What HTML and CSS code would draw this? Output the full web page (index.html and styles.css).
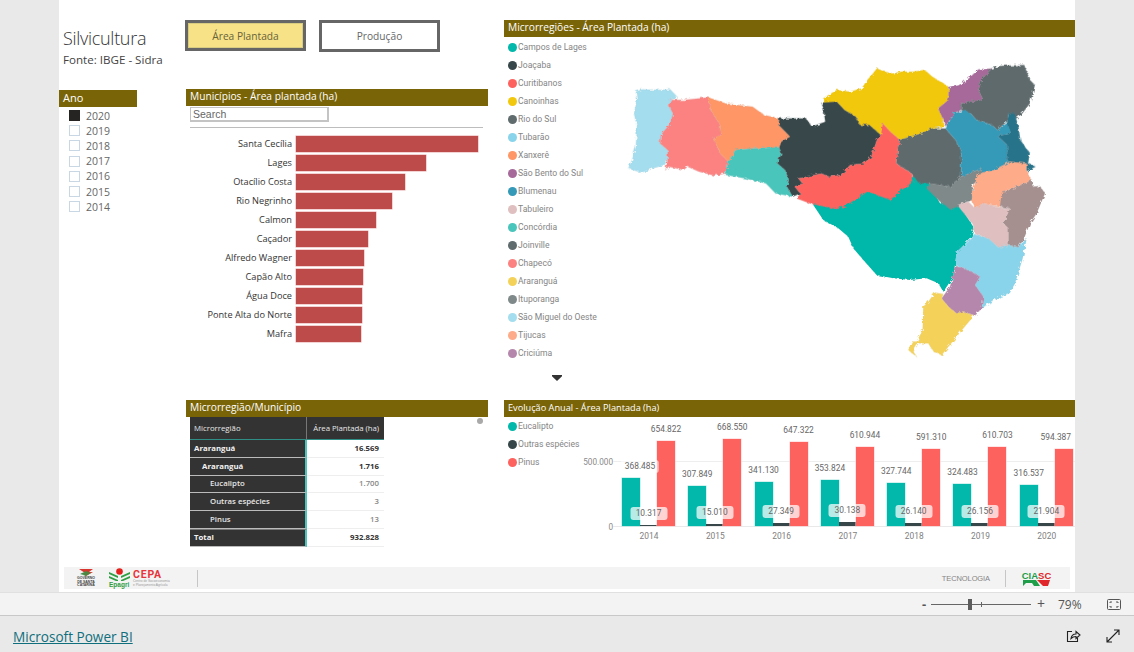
FILE: index.html
```html
<!DOCTYPE html>
<html lang="pt-BR">
<head>
<meta charset="utf-8">
<title>Silvicultura</title>
<link rel="stylesheet" href="styles.css">
</head>
<body>
<main class="stage">
  <div class="canvas">
    <section class="cell-intro">
      <h1 class="title">Silvicultura</h1>
      <p class="source">Fonte: IBGE - Sidra</p>
      <h2 class="band band-ano">Ano</h2>
      <ul class="years">
        <li class="year"><span class="check check-on"></span>2020</li>
        <li class="year"><span class="check"></span>2019</li>
        <li class="year"><span class="check"></span>2018</li>
        <li class="year"><span class="check"></span>2017</li>
        <li class="year"><span class="check"></span>2016</li>
        <li class="year"><span class="check"></span>2015</li>
        <li class="year"><span class="check"></span>2014</li>
      </ul>
    </section>

    <section class="cell-mun">
      <div class="tabs">
        <button class="tab tab-on">Área Plantada</button>
        <button class="tab">Produção</button>
      </div>
      <h2 class="band">Municípios - Área plantada (ha)</h2>
      <div class="search">Search</div>
      <div class="rule"></div>
      <ul class="hbars">
        <li class="hbar"><span class="hbar-name">Santa Cecília</span><span class="hbar-fill" style="width:182px"></span></li>
        <li class="hbar"><span class="hbar-name">Lages</span><span class="hbar-fill" style="width:130px"></span></li>
        <li class="hbar"><span class="hbar-name">Otacílio Costa</span><span class="hbar-fill" style="width:109px"></span></li>
        <li class="hbar"><span class="hbar-name">Rio Negrinho</span><span class="hbar-fill" style="width:96px"></span></li>
        <li class="hbar"><span class="hbar-name">Calmon</span><span class="hbar-fill" style="width:80px"></span></li>
        <li class="hbar"><span class="hbar-name">Caçador</span><span class="hbar-fill" style="width:72px"></span></li>
        <li class="hbar"><span class="hbar-name">Alfredo Wagner</span><span class="hbar-fill" style="width:68px"></span></li>
        <li class="hbar"><span class="hbar-name">Capão Alto</span><span class="hbar-fill" style="width:67px"></span></li>
        <li class="hbar"><span class="hbar-name">Água Doce</span><span class="hbar-fill" style="width:66px"></span></li>
        <li class="hbar"><span class="hbar-name">Ponte Alta do Norte</span><span class="hbar-fill" style="width:66px"></span></li>
        <li class="hbar"><span class="hbar-name">Mafra</span><span class="hbar-fill" style="width:65px"></span></li>
      </ul>
    </section>

    <section class="cell-map">
      <h2 class="band">Microrregiões - Área Plantada (ha)</h2>
      <div class="map-body">
        <div class="map-legend">
          <ul class="legend">
            <li class="legend-item"><i class="dot" style="background:#01b8aa"></i>Campos de Lages</li>
            <li class="legend-item"><i class="dot" style="background:#374649"></i>Joaçaba</li>
            <li class="legend-item"><i class="dot" style="background:#fd625e"></i>Curitibanos</li>
            <li class="legend-item"><i class="dot" style="background:#f2c80f"></i>Canoinhas</li>
            <li class="legend-item"><i class="dot" style="background:#5f6b6d"></i>Rio do Sul</li>
            <li class="legend-item"><i class="dot" style="background:#8ad4eb"></i>Tubarão</li>
            <li class="legend-item"><i class="dot" style="background:#fe9666"></i>Xanxerê</li>
            <li class="legend-item"><i class="dot" style="background:#a66999"></i>São Bento do Sul</li>
            <li class="legend-item"><i class="dot" style="background:#3599b8"></i>Blumenau</li>
            <li class="legend-item"><i class="dot" style="background:#dfbfbf"></i>Tabuleiro</li>
            <li class="legend-item"><i class="dot" style="background:#4ac5bb"></i>Concórdia</li>
            <li class="legend-item"><i class="dot" style="background:#5f6b6d"></i>Joinville</li>
            <li class="legend-item"><i class="dot" style="background:#fb8281"></i>Chapecó</li>
            <li class="legend-item"><i class="dot" style="background:#f4d25a"></i>Araranguá</li>
            <li class="legend-item"><i class="dot" style="background:#7f898a"></i>Ituporanga</li>
            <li class="legend-item"><i class="dot" style="background:#a4ddee"></i>São Miguel do Oeste</li>
            <li class="legend-item"><i class="dot" style="background:#fdab89"></i>Tijucas</li>
            <li class="legend-item"><i class="dot" style="background:#b687ac"></i>Criciúma</li>
          </ul>
          <svg class="legend-more" viewBox="0 0 10 6" width="10" height="6"><path d="M0 0H10V1.2L5 6L0 1.2Z" fill="#333"/></svg>
        </div>
        <svg class="map" viewBox="600 50 460 320" width="460" height="320" aria-label="Mapa das microrregiões">
          <defs>
            <filter id="rough" x="-5%" y="-5%" width="110%" height="110%">
              <feTurbulence type="fractalNoise" baseFrequency="0.28" numOctaves="3" seed="7"/>
              <feDisplacementMap in="SourceGraphic" scale="4"/>
            </filter>
          </defs>
          <g filter="url(#rough)" stroke="#9a9a9a" stroke-width="0.35" stroke-opacity=".7">
            <g transform="translate(600 170) scale(.3333)">
              <polygon fill="#01b8aa" points="640,105 640,85 735,95 770,45 870,70 900,50 940,15 985,35 1020,100 1072,95 1120,170 1115,200 1070,250 1065,285 1060,320 1030,365 1015,340 980,325 930,330 880,325 830,315 790,270 760,235 745,200 715,175 670,150"/>
            </g>
            <g transform="translate(500 10) scale(.3826 .3333)">
              <polygon fill="#a4ddee" points="355,245 370,238 420,240 445,238 465,262 445,270 442,290 452,310 445,340 420,375 418,400 438,420 438,450 430,465 400,475 370,488 335,475 345,450 355,410 358,350 350,310 358,270"/>
              <polygon fill="#fb8281" points="445,270 480,270 545,262 550,300 575,345 578,375 558,385 575,430 597,455 590,490 560,497 520,485 490,470 480,480 440,470 432,482 438,450 438,420 418,400 420,375 445,340 452,310 442,290"/>
              <polygon fill="#fe9666" points="545,262 590,280 620,285 660,290 690,315 730,325 728,345 750,370 758,380 735,395 730,412 660,415 615,420 597,455 575,430 558,385 578,375 575,345 550,300"/>
              <polygon fill="#4ac5bb" points="615,420 660,415 730,412 735,430 725,460 745,480 755,510 750,530 765,560 720,550 695,520 640,505 590,495 597,455"/>
              <polygon fill="#f2c80f" points="845,265 880,240 915,245 945,235 960,210 975,190 985,175 1005,185 1025,190 1050,185 1080,185 1110,180 1130,200 1172,230 1172,270 1145,295 1155,320 1160,350 1130,355 1100,370 1045,390 1020,365 1000,340 995,375 965,345 940,345 930,320 900,300 880,275 845,285"/>
              <polygon fill="#5f6b6d" points="1045,390 1100,370 1130,355 1165,355 1190,390 1205,420 1205,500 1175,530 1120,520 1095,520 1075,490 1035,460 1040,410"/>
              <polygon fill="#fd625e" points="1000,340 1020,365 1045,390 1040,410 1035,460 1075,490 1080,515 1050,540 1020,570 960,545 900,590 870,595 810,580 775,565 785,550 770,530 790,520 780,505 840,490 860,500 890,495 915,465 950,460 970,440 985,390 995,375"/>
              <polygon fill="#374649" points="730,325 770,325 800,325 815,350 850,335 845,295 840,278 880,275 900,300 930,320 940,345 965,345 995,375 985,390 970,440 950,460 915,465 890,495 860,500 840,490 780,505 790,520 770,530 785,550 765,560 750,530 755,510 745,480 725,460 735,430 730,412 735,395 758,380 750,370 728,345"/>
              <polygon fill="#a66999" points="1172,235 1200,225 1225,205 1250,178 1285,175 1260,205 1250,240 1262,268 1205,280 1205,300 1185,310 1165,350 1155,320 1145,295 1172,270"/>
              <polygon fill="#5f6b6d" points="1285,175 1305,168 1370,165 1385,210 1398,225 1385,280 1365,310 1350,325 1330,310 1325,335 1300,360 1285,345 1245,330 1230,310 1205,300 1205,280 1262,268 1250,240 1260,205"/>
              <polygon fill="#3599b8" points="1185,310 1215,300 1230,310 1245,330 1285,345 1300,360 1330,335 1335,370 1300,378 1325,405 1325,450 1340,465 1290,490 1255,510 1258,475 1205,500 1205,420 1190,390 1165,355"/>
              <polygon fill="#28738a" points="1330,310 1345,310 1355,350 1360,390 1385,430 1380,460 1400,470 1375,485 1340,465 1325,450 1325,405 1300,378 1335,370 1325,335"/>
              <polygon fill="#7f898a" points="1258,475 1255,505 1235,525 1235,570 1200,585 1180,600 1150,575 1115,535 1125,520 1175,530 1205,500"/>
            </g>
            <g transform="translate(600 170) scale(.3333)">
              <polygon fill="#fdab89" points="1120,55 1135,10 1180,0 1230,-25 1280,-20 1280,0 1295,30 1215,65 1200,110 1150,100 1125,115 1115,95"/>
              <polygon fill="#a58f8f" points="1205,70 1295,30 1298,50 1320,48 1335,70 1310,130 1290,160 1270,210 1255,232 1225,225 1225,175 1210,160 1230,115 1200,110"/>
              <polygon fill="#dfbfbf" points="1072,105 1105,95 1125,115 1150,100 1200,112 1230,115 1210,160 1225,175 1225,225 1195,232 1165,205 1122,190 1120,165"/>
              <polygon fill="#8ad4eb" points="1122,192 1165,205 1195,232 1225,225 1255,232 1280,205 1268,265 1245,340 1230,368 1180,390 1145,415 1150,380 1125,345 1140,320 1095,295 1065,285 1070,245 1115,205"/>
              <polygon fill="#b687ac" points="1068,288 1095,295 1140,320 1125,345 1150,380 1145,415 1125,437 1090,425 1070,430 1045,410 1025,385 1050,350"/>
              <polygon fill="#f4d25a" points="1005,368 1030,372 1025,385 1045,410 1070,430 1090,425 1122,437 1090,475 1025,555 1000,545 985,520 955,520 940,545 952,562 925,540 935,515 950,515 968,480 970,410 985,395"/>
            </g>
          </g>
        </svg>
      </div>
    </section>

    <section class="cell-table">
      <h2 class="band">Microrregião/Município</h2>
      <span class="scroll-dot"></span>
      <table class="matrix">
        <thead>
          <tr><th class="m-name">Microrregião</th><th class="m-val m-head">Área Plantada (ha)</th></tr>
        </thead>
        <tbody>
          <tr class="m-bold"><th class="m-name">Araranguá</th><td class="m-val">16.569</td></tr>
          <tr class="m-bold"><th class="m-name m-l1">Araranguá</th><td class="m-val">1.716</td></tr>
          <tr><th class="m-name m-l2">Eucalipto</th><td class="m-val">1.700</td></tr>
          <tr><th class="m-name m-l2">Outras espécies</th><td class="m-val">3</td></tr>
          <tr><th class="m-name m-l2">Pinus</th><td class="m-val">13</td></tr>
          <tr class="m-bold m-total"><th class="m-name">Total</th><td class="m-val">932.828</td></tr>
        </tbody>
      </table>
    </section>

    <section class="cell-chart">
      <h2 class="band band-small">Evolução Anual - Área Plantada (ha)</h2>
      <div class="chart-body">
        <ul class="legend legend-chart">
          <li class="legend-item"><i class="dot" style="background:#01b8aa"></i>Eucalipto</li>
          <li class="legend-item"><i class="dot" style="background:#374649"></i>Outras espécies</li>
          <li class="legend-item"><i class="dot" style="background:#fd625e"></i>Pinus</li>
        </ul>
        <div class="y-axis">
          <span class="y-tick">500.000</span>
          <span class="y-tick">0</span>
        </div>
        <div class="plot">
          <div class="grid-line"></div>
          <div class="group">
            <div class="bars">
              <div class="bar b-g" style="height:48px"><span class="val val-first">368.485</span></div>
              <div class="bar b-d" style="height:1.5px"><span class="val val-d">10.317</span></div>
              <div class="bar b-r" style="height:85px"><span class="val">654.822</span></div>
            </div>
            <span class="yr">2014</span>
          </div>
          <div class="group">
            <div class="bars">
              <div class="bar b-g" style="height:40px"><span class="val">307.849</span></div>
              <div class="bar b-d" style="height:2px"><span class="val val-d">15.010</span></div>
              <div class="bar b-r" style="height:87px"><span class="val">668.550</span></div>
            </div>
            <span class="yr">2015</span>
          </div>
          <div class="group">
            <div class="bars">
              <div class="bar b-g" style="height:44px"><span class="val">341.130</span></div>
              <div class="bar b-d" style="height:3.5px"><span class="val val-d">27.349</span></div>
              <div class="bar b-r" style="height:84px"><span class="val">647.322</span></div>
            </div>
            <span class="yr">2016</span>
          </div>
          <div class="group">
            <div class="bars">
              <div class="bar b-g" style="height:46px"><span class="val">353.824</span></div>
              <div class="bar b-d" style="height:4px"><span class="val val-d">30.138</span></div>
              <div class="bar b-r" style="height:79px"><span class="val">610.944</span></div>
            </div>
            <span class="yr">2017</span>
          </div>
          <div class="group">
            <div class="bars">
              <div class="bar b-g" style="height:43px"><span class="val">327.744</span></div>
              <div class="bar b-d" style="height:3.4px"><span class="val val-d">26.140</span></div>
              <div class="bar b-r" style="height:77px"><span class="val">591.310</span></div>
            </div>
            <span class="yr">2018</span>
          </div>
          <div class="group">
            <div class="bars">
              <div class="bar b-g" style="height:42px"><span class="val">324.483</span></div>
              <div class="bar b-d" style="height:3.4px"><span class="val val-d">26.156</span></div>
              <div class="bar b-r" style="height:79px"><span class="val">610.703</span></div>
            </div>
            <span class="yr">2019</span>
          </div>
          <div class="group">
            <div class="bars">
              <div class="bar b-g" style="height:41px"><span class="val">316.537</span></div>
              <div class="bar b-d" style="height:2.8px"><span class="val val-d">21.904</span></div>
              <div class="bar b-r" style="height:77px"><span class="val val-last">594.387</span></div>
            </div>
            <span class="yr">2020</span>
          </div>
        </div>
      </div>
    </section>

    <footer class="logos">
      <div class="logo-gov">
        <svg viewBox="0 0 16 8" width="16" height="8"><path d="M1 1H15L11 4H15L8 8L3 5H7Z" fill="#d9362f"/><path d="M2 6L8 3L13 5L8 8Z" fill="#2d9a46" opacity=".8"/></svg>
        <span class="logo-gov-text">GOVERNO DE SANTA CATARINA</span>
      </div>
      <div class="logo-epagri">
        <svg viewBox="0 0 21 13" width="21" height="13"><circle cx="10.5" cy="3.5" r="3.3" fill="#e2211c"/><path d="M0 4L9 8V10L0 6ZM21 4L12 8V10L21 6ZM0 8L9 12V13H7L0 10ZM21 8L12 12V13H14L21 10Z" fill="#2f9e44"/></svg>
        <span class="epagri-name">Epagri</span>
      </div>
      <div class="logo-cepa">
        <span class="cepa-name">CEPA</span>
        <span class="cepa-sub">Centro de Socioeconomia<br>e Planejamento Agrícola</span>
      </div>
      <span class="logo-div"></span>
      <span class="logos-gap"></span>
      <span class="tec">TECNOLOGIA</span>
      <span class="logo-div"></span>
      <div class="logo-ciasc">
        <span class="ciasc-name"><span class="c-green">CIA</span><span class="c-red">SC</span></span>
        <svg class="ciasc-mark" viewBox="0 0 27 6" width="27" height="6"><path d="M0 0H13L17 6H11L9 3H3L0 6Z" fill="#1f9e4a"/><path d="M14 0H27L25 6H20Z" fill="#e0262b"/></svg>
      </div>
    </footer>
  </div>
</main>

<div class="zoombar">
  <span class="z-minus">-</span>
  <div class="z-track"><span class="z-tick"></span><span class="z-thumb"></span></div>
  <span class="z-plus">+</span>
  <span class="z-pct">79%</span>
  <svg class="z-fit" viewBox="0 0 14 11" width="14" height="11" fill="none" stroke="#555"><rect x=".5" y=".5" width="13" height="10" rx="1"/><path d="M3 4V3H5M9 3H11V4M11 7V8H9M5 8H3V7"/></svg>
</div>

<div class="powerbar">
  <a class="pbi" href="#">Microsoft Power BI</a>
  <div class="pbi-tools">
    <svg viewBox="0 0 15 14" width="15" height="14" fill="none" stroke="#222" stroke-width="1.1"><path d="M6 2.5H1.5V12.5H11.5V9"/><path d="M5 9.5C5.5 6.5 7.5 5 10 5V2.5L14 6L10 9.5V7.5C8 7.5 6.5 8 5 9.5Z"/></svg>
    <svg viewBox="0 0 14 14" width="14" height="14" fill="none" stroke="#222" stroke-width="1.1"><path d="M1 13L13 1M8 1H13V6M1 8V13H6"/></svg>
  </div>
</div>
</body>
</html>
```
FILE: styles.css
```css
* { box-sizing: border-box; }
html, body { margin: 0; padding: 0; }
body {
  width: 1134px;
  height: 652px;
  overflow: hidden;
  background: #e9e9e9;
  font-family: "Open Sans", "Noto Sans", sans-serif;
  color: #333;
}
h1, h2, p, ul { margin: 0; padding: 0; font-weight: 400; }
ul { list-style: none; }

.stage { height: 592px; padding-left: 59px; }
.canvas {
  width: 1016px;
  height: 592px;
  background: #fff;
  padding-top: 20px;
  display: grid;
  grid-template-columns: 127px 318px 571px;
  grid-template-rows: 380px 167px 25px;
  grid-template-areas:
    "intro mun map"
    ". table chart"
    "logos logos logos";
}

.band {
  height: 17px;
  line-height: 15px;
  background: #7a6408;
  color: #fff;
  font-size: 10.2px;
  padding-left: 4px;
  white-space: nowrap;
}
.band-small { font-size: 9.2px; }

/* intro column */
.cell-intro { grid-area: intro; }
.title { font-size: 18px; font-weight: 300; letter-spacing: -.3px; line-height: 26px; margin: 5px 0 1px 4px; color: #333; }
.source { font-size: 11.6px; line-height: 16px; margin: 0 0 0 4px; color: #444; }
.band-ano { width: 78px; margin-top: 22px; font-size: 11px; }
.years { padding: 1px 0 0 10px; }
.year { height: 15.2px; display: flex; align-items: center; font-size: 10.5px; color: #666; }
.check { width: 11px; height: 11px; border: 1px solid #c9d6e4; margin-right: 6px; }
.check-on { background: #252423; border-color: #252423; }

/* municipalities */
.cell-mun { grid-area: mun; width: 302px; }
.tabs { display: flex; gap: 13px; height: 69px; margin-left: -1px; }
.tab {
  width: 121px;
  height: 32px;
  border: 3px solid #666;
  background: #fff;
  color: #666;
  font: 400 10.2px "Open Sans", sans-serif;
  padding: 0;
}
.tab-on { background: #f8e287; color: #66623a; outline: 1px solid #d8cc80; outline-offset: -4px; height: 31px; }
.search {
  width: 139px;
  height: 15px;
  margin: 1px 0 0 4px;
  border: 1px solid #c4c4c4;
  border-width: 1px 2px 2px 1px;
  font: 10.5px/12px "Liberation Sans", sans-serif;
  color: #666;
  padding-left: 2px;
}
.rule { height: 1px; background: #bdbdbd; margin: 5px 5px 0 4px; }
.hbars { padding-top: 6px; }
.hbar { height: 19px; display: flex; align-items: center; }
.hbar-name { width: 106px; text-align: right; font-size: 9.2px; color: #333; white-space: nowrap; margin-right: 4px; flex: none; }
.hbar-fill { height: 16px; background: #bd4b4a; box-shadow: 0 0 0 .5px #e8a8a8; }

/* map */
.cell-map { grid-area: map; }
.map-body { display: flex; }
.map-legend { width: 96px; position: relative; flex: none; }
.legend { padding: 1px 0 0 4px; }
.legend-item {
  height: 18px;
  display: flex;
  align-items: center;
  font-family: Roboto, sans-serif;
  font-size: 8.6px;
  color: #858585;
  white-space: nowrap;
}
.dot { width: 9px; height: 9px; border-radius: 50%; margin-right: 1px; flex: none; }
.legend-more { display: block; margin: 13px 0 0 48px; }
.map { display: block; margin-top: 13px; flex: none; }

/* table */
.cell-table { grid-area: table; width: 302px; position: relative; }
.scroll-dot { position: absolute; left: 291px; top: 18px; width: 6px; height: 6px; border-radius: 50%; background: #a9a9a9; }
.matrix { border-collapse: separate; border-spacing: 0; margin-left: 4px; width: 194px; table-layout: fixed; font-size: 7.8px; }
.matrix th, .matrix td { padding: 0; height: 17.8px; line-height: 15px; font-weight: 600; white-space: nowrap; }
.m-name { width: 117px; background: #333; color: #e8e8e8; text-align: left; padding-left: 4px !important; border-bottom: 1px solid #bbb; border-right: 2px solid #4ac5bb; }
.m-val { text-align: right; padding-right: 5px !important; color: #888; background: #fff; border-bottom: 1px solid #eee; }
.m-l1 { padding-left: 12px !important; }
.m-l2 { padding-left: 20px !important; }
.matrix thead th { height: 23px; border-bottom: 1px solid #2f8f86; font-weight: 500; }
.matrix thead .m-name { border-right: 1px solid #777; }
.matrix thead .m-head { background: #333; color: #e8e8e8; font-size: 7.8px; letter-spacing: -.05px; }
.m-bold th, .m-bold td { font-weight: 700; color: #333; }
.m-bold th { color: #f2f2f2; }
.m-total th { border-top: 1px solid #777; }

/* chart */
.cell-chart { grid-area: chart; }
.chart-body { display: flex; height: 130px; }
.legend-chart { width: 81px; flex: none; padding-top: 0; }
.y-axis { width: 28px; flex: none; position: relative; }
.y-tick { position: absolute; right: 0; font: 8.2px Roboto, sans-serif; color: #8a8a8a; line-height: 10px; }
.y-tick:first-child { top: 40px; }
.y-tick:last-child { top: 105px; }
.plot { width: 462px; flex: none; display: flex; position: relative; height: 110px; border-bottom: 1px solid #e9e9e9; }
.grid-line { position: absolute; left: 0; right: 0; top: 44px; height: 1px; background: #eee; }
.group { width: 66.3px; position: relative; flex: none; }
.bars { position: absolute; left: 9px; bottom: 0; display: flex; align-items: flex-end; }
.bar { width: 18px; position: relative; flex: none; }
.b-g { background: #01b8aa; box-shadow: 0 0 0 .5px #a5e6e0; }
.b-d { width: 17px; background: #374649; }
.b-r { background: #fd625e; box-shadow: 0 0 0 .5px #fcc; }
.val {
  position: absolute;
  left: 50%;
  bottom: calc(100% + 5px);
  transform: translateX(-50%);
  font: 8.4px/13px Roboto, sans-serif;
  color: #666;
  white-space: nowrap;
  border-radius: 3px;
  padding: 0 4px;
  height: 13px;
}
.val-d { background: rgba(255, 255, 255, .72); width: 37px; text-align: center; padding: 0; z-index: 2; }
.val-first { background: rgba(255, 255, 255, .6); margin-left: 9px; z-index: 2; }
.val-last { margin-left: -8px; }
.yr { position: absolute; left: 0; width: 54px; text-align: center; top: 114px; font: 8.4px/10px Roboto, sans-serif; color: #808080; margin-left: 9px; }

/* logos */
.logos {
  grid-area: logos;
  margin: 0 5px 3px;
  background: #f3f3f3;
  display: flex;
  align-items: center;
  height: 22px;
  padding-left: 14px;
}
.logo-gov { width: 16px; display: flex; flex-direction: column; align-items: center; margin-right: 15px; }
.logo-gov-text { font: 700 3.5px/3.5px "Liberation Sans", sans-serif; color: #444; text-align: center; margin-top: 1px; }
.logo-epagri { width: 21px; display: flex; flex-direction: column; margin-right: 3px; }
.logo-epagri svg { display: block; }
.epagri-name { font: 700 6.5px/7px "Liberation Sans", sans-serif; color: #2f9e44; }
.logo-cepa { display: flex; flex-direction: column; width: 50px; margin-right: 14px; }
.cepa-name { font: 700 10.5px/11px Roboto, sans-serif; color: #e8333a; letter-spacing: .8px; }
.cepa-sub { font: 3.2px/3.5px "Liberation Sans", sans-serif; color: #999; }
.logo-div { width: 1px; height: 17px; background: #c6c6c6; flex: none; }
.logos-gap { flex: 1; }
.tec { font: 400 7.5px "Liberation Sans", sans-serif; letter-spacing: -.1px; color: #858585; margin-right: 15px; }
.logo-ciasc { display: flex; flex-direction: column; margin: 0 20px 0 17px; width: 27px; align-items: center; }
.ciasc-name { font: 700 9.5px/9px "Liberation Sans", sans-serif; }
.ciasc-mark { display: block; }
.c-green { color: #1f9e4a; }
.c-red { color: #e0262b; }

/* zoom bar */
.zoombar {
  height: 23px;
  background: #f3f3f3;
  border-top: 1px solid #e0e0e0;
  display: flex;
  align-items: center;
  padding-left: 922px;
  color: #555;
}
.z-minus { width: 9px; font-size: 13px; font-weight: 700; line-height: 18px; }
.z-track { width: 100px; height: 1px; background: #666; position: relative; }
.z-thumb { position: absolute; left: 37px; top: -5px; width: 4px; height: 11px; background: #5c5c5c; }
.z-tick { position: absolute; left: 50px; top: -2px; width: 1px; height: 5px; background: #666; }
.z-plus { width: 27px; padding-left: 6px; font-size: 14px; line-height: 18px; }
.z-pct { width: 49px; font-size: 12px; color: #555; }
.z-fit { display: block; flex: none; }

/* powered by */
.powerbar {
  height: 37px;
  background: #e9e9e9;
  border-top: 1px solid #c8c8c8;
  display: flex;
  align-items: center;
  padding: 4px 14px 0 13px;
  justify-content: space-between;
}
.pbi { font-size: 13.6px; color: #0f6f7c; text-decoration: underline; }
.pbi-tools { display: flex; gap: 25px; }
.pbi-tools svg { display: block; }
```
